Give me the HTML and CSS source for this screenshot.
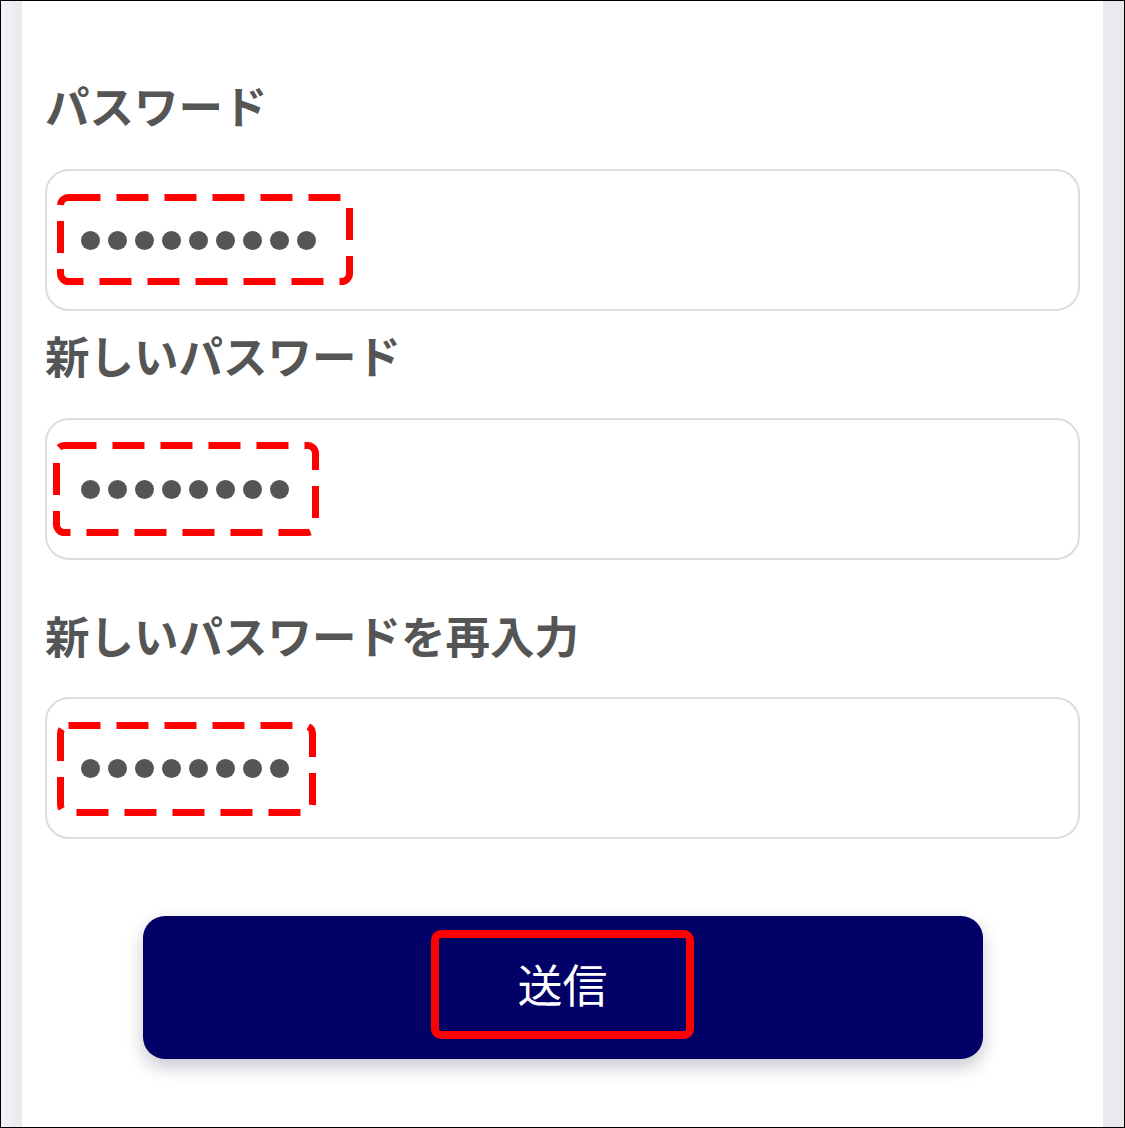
FILE: index.html
```html
<!DOCTYPE html>
<html lang="ja">
<head>
    <meta charset="UTF-8">
    <meta name="viewport" content="width=device-width, initial-scale=1.0">
    <title>パスワード変更</title>
    <link rel="stylesheet" href="styles.css">
</head>
<body>
    <div class="frame">
        <div class="side side-left"></div>
        <main class="panel">
            <div class="group group-first">
                <label class="label">パスワード</label>
                <div class="field">
                    <div class="dots">
                        <span></span><span></span><span></span><span></span><span></span><span></span><span></span><span></span><span></span>
                    </div>
                    <svg class="mark mark-1" width="296" height="91" viewBox="0 0 296 91">
                        <rect x="3.5" y="3.5" width="289" height="84" rx="8" />
                    </svg>
                </div>
            </div>
            <div class="group group-second">
                <label class="label">新しいパスワード</label>
                <div class="field">
                    <div class="dots">
                        <span></span><span></span><span></span><span></span><span></span><span></span><span></span><span></span>
                    </div>
                    <svg class="mark mark-2" width="266" height="94" viewBox="0 0 266 94">
                        <rect x="3.5" y="3.5" width="259" height="87" rx="8" />
                    </svg>
                </div>
            </div>
            <div class="group group-third">
                <label class="label">新しいパスワードを再入力</label>
                <div class="field">
                    <div class="dots">
                        <span></span><span></span><span></span><span></span><span></span><span></span><span></span><span></span>
                    </div>
                    <svg class="mark mark-3" width="259" height="94" viewBox="0 0 259 94">
                        <rect x="3.5" y="3.5" width="252" height="87" rx="8" />
                    </svg>
                </div>
            </div>
            <div class="actions">
                <button class="submit" type="button">
                    送信
                    <span class="submit-mark"></span>
                </button>
            </div>
        </main>
        <div class="side side-right"></div>
    </div>
</body>
</html>
```

FILE: styles.css
```css
* {
    box-sizing: border-box;
}

body {
    margin: 0;
    font-family: "Noto Sans CJK JP", "Noto Sans", sans-serif;
    background-color: #fff;
}

.frame {
    display: flex;
    width: 1125px;
    height: 1128px;
    border: 1px solid #000;
    overflow: hidden;
}

.side {
    flex: 0 0 auto;
    background-color: #e9e9ee;
}

.side-left {
    width: 21px;
    background: linear-gradient(to right, #f4f4f7, #e9e9ee);
}

.side-right {
    width: 21px;
}

.panel {
    flex: 1;
    background-color: #fff;
    padding: 74px 23px 0;
}

.label {
    display: block;
    font-size: 44.5px;
    font-weight: 700;
    line-height: 60px;
    color: #555;
}

.field {
    position: relative;
    height: 142px;
    margin-top: 34px;
    border: 2px solid #ddd;
    border-radius: 24px;
    display: flex;
    align-items: center;
    padding-left: 34px;
}

.group-second {
    margin-top: 14px;
}

.group-second .field {
    margin-top: 33px;
}

.group-third {
    margin-top: 45px;
}

.group-third .field {
    margin-top: 32px;
}

.dots {
    display: flex;
    gap: 8px;
}

.dots span {
    width: 19px;
    height: 19px;
    border-radius: 50%;
    background-color: #555;
}

.mark {
    position: absolute;
    fill: none;
    stroke: #ff0000;
    stroke-width: 7;
    stroke-dasharray: 32 16;
}

.mark-1 {
    left: 10px;
    top: 23px;
}

.mark-2 {
    left: 6px;
    top: 22px;
}

.mark-3 {
    left: 10px;
    top: 23px;
}

.actions {
    display: flex;
    justify-content: center;
    margin-top: 77px;
}

.submit {
    position: relative;
    width: 840px;
    height: 143px;
    padding: 0 0 8px;
    border: none;
    border-radius: 22px;
    background-color: #000066;
    color: #fff;
    font-family: "Noto Sans CJK JP", sans-serif;
    font-size: 45px;
    box-shadow: 0 8px 18px rgba(0, 0, 40, 0.22);
}

.submit-mark {
    position: absolute;
    left: 288px;
    top: 14px;
    width: 263px;
    height: 109px;
    border: 8px solid #ff0000;
    border-radius: 10px;
}
```
